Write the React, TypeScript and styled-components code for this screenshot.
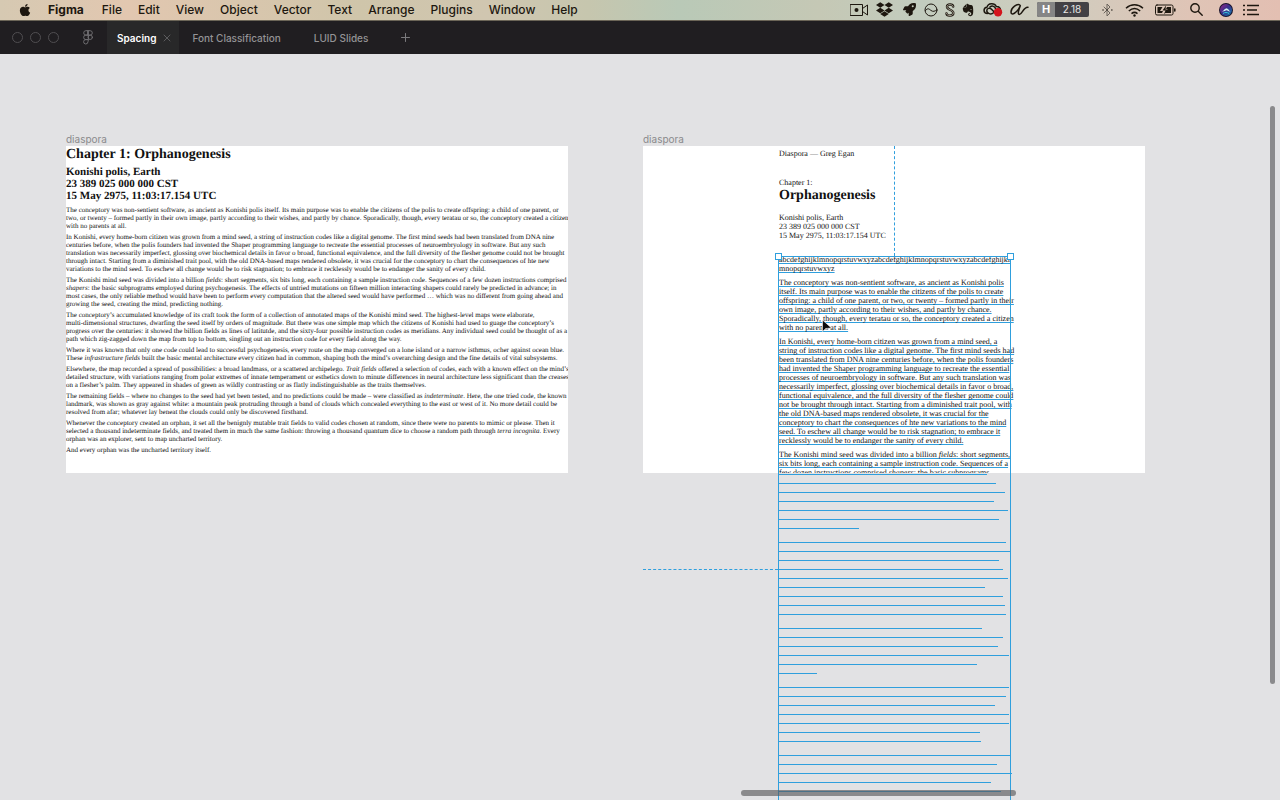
import React from "react";
import styled, { createGlobalStyle } from "styled-components";
import { FaApple, FaDropbox, FaEvernote, FaRocket } from "react-icons/fa";

const BLUE = "#2f9fdd";

const GlobalStyle = createGlobalStyle`
  * { box-sizing: border-box; }
  body { margin: 0; background: #e2e2e4; font-family: Inter, "Liberation Sans", sans-serif; overflow: hidden; }
  h1, h2, p { margin: 0; }
  button { border: 0; padding: 0; background: none; font: inherit; color: inherit; white-space: nowrap; }
`;

const Screen = styled.div`
  display: flex;
  flex-direction: column;
  height: 100vh;
`;

const MenuBar = styled.header`
  display: flex;
  flex: none;
  align-items: center;
  justify-content: space-between;
  height: 21px;
  padding: 0 16px 1px 18px;
  border-bottom: 1px solid #6b6557;
  background: linear-gradient(90deg, #d6c9b2 0%, #e2c7b0 10%, #cfc5aa 28%, #d0c6b0 38%, #c6c6ae 46%, #b9c9b7 53%, #c5c8b5 64%, #c2ccbe 72%, #cfcdbf 82%, #dfc4b6 93%, #e3bfb2 100%);
  color: #1d170f;
`;

const Menus = styled.nav`
  display: flex;
  align-items: center;
  gap: 16px;
  font-size: 12px;
  font-weight: 500;
  line-height: 20px;
`;

const MenuButton = styled.button<{ $bold?: boolean }>`
  display: flex;
  font-weight: ${(p) => (p.$bold ? 700 : 500)};
  margin-right: ${(p) => (p.$bold ? 2 : 0)}px;
`;

const Status = styled.div`
  display: flex;
  align-items: center;
  svg { display: block; }
`;

const StatusItem = styled.button<{ $width: number }>`
  display: flex;
  justify-content: center;
  width: ${(p) => p.$width}px;
`;

const Harvest = styled.button`
  display: flex;
  height: 15px;
  border-radius: 2px;
  overflow: hidden;
  background: #434145;
  color: #e8e6e4;
  font-size: 10px;
  line-height: 15px;
  margin: 0 8px 0 7px;
  b { width: 18px; background: #858585; color: #fff; font-size: 11px; }
  span { width: 34px; }
`;

const TabBar = styled.div`
  display: flex;
  flex: none;
  align-items: center;
  height: 33px;
  background: #201e21;
  color: #949396;
  font-size: 10px;
  font-weight: 500;
`;

const WindowControls = styled.div`
  display: flex;
  gap: 7px;
  margin: 0 24px 0 12px;
`;

const WindowDot = styled.button`
  width: 11px;
  height: 11px;
  border: 1px solid #504e51;
  border-radius: 50%;
`;

const HomeButton = styled.button`
  display: flex;
  margin-right: 14px;
`;

const Tab = styled.div<{ $active?: boolean }>`
  display: flex;
  align-items: center;
  gap: 7px;
  height: 33px;
  padding: ${(p) => (p.$active ? "0 8px 0 10px" : "0 20px 0 13px")};
  background: ${(p) => (p.$active ? "#282829" : "none")};
  color: ${(p) => (p.$active ? "#fff" : "inherit")};
  font-weight: ${(p) => (p.$active ? 600 : 500)};
`;

const Canvas = styled.main`
  position: relative;
  flex: 1;
  overflow: hidden;
  background: #e2e2e4;
`;

const Artboard = styled.section<{ $x: number }>`
  position: absolute;
  left: ${(p) => p.$x}px;
  top: 78px;
  width: 502px;
`;

const ArtboardName = styled.div`
  height: 14px;
  color: #8a8a8c;
  font-size: 10px;
  line-height: 14px;
`;

const Paper = styled.article<{ $indent: number }>`
  height: 327px;
  padding-left: ${(p) => p.$indent}px;
  overflow: hidden;
  background: #fff;
  color: #111;
  font-family: "Liberation Serif", "Times New Roman", serif;
  text-rendering: geometricPrecision;
  white-space: nowrap;
`;

const Title = styled.h1`
  font-size: 14px;
  line-height: 17px;
`;

const Subtitle = styled.h2`
  padding: 3px 0 4px;
  font-size: 11px;
  line-height: 12px;
`;

const Small = styled.p<{ $top: number }>`
  padding-top: ${(p) => p.$top}px;
  font-size: 8px;
  line-height: 9px;
`;

const Paragraph = styled.p<{ $large?: boolean }>`
  margin-bottom: ${(p) => (p.$large ? 5 : 3)}px;
  font-size: ${(p) => (p.$large ? 8 : 7)}px;
  line-height: ${(p) => (p.$large ? 9 : 8)}px;
`;

const Line = styled.span<{ $outlined?: boolean }>`
  display: block;
  text-decoration: ${(p) => (p.$outlined ? `underline 1px ${BLUE}` : "none")};
  text-underline-offset: 1px;
  text-decoration-skip-ink: none;
`;

const Body = styled.div`
  padding-top: 15px;
`;

const Selection = styled.div`
  position: absolute;
  left: 778px;
  top: 202px;
  bottom: -10px;
  width: 233px;
  padding-top: 217px;
  border: 1px solid ${BLUE};
`;

const Handle = styled.i<{ $side: "left" | "right" }>`
  position: absolute;
  top: -4px;
  ${(p) => p.$side}: -4px;
  width: 7px;
  height: 7px;
  border: 1px solid ${BLUE};
  background: #fff;
`;

const OutlineGroup = styled.div`
  margin-bottom: 5px;
`;

const OutlineRow = styled.div`
  height: 9px;
  border-top: 1px solid ${BLUE};
`;

const VerticalGuide = styled.div`
  position: absolute;
  left: 894px;
  top: 92px;
  height: 110px;
  border-left: 1px dashed ${BLUE};
`;

const HorizontalGuide = styled.div`
  position: absolute;
  left: 643px;
  top: 515px;
  width: 135px;
  border-top: 1px dashed ${BLUE};
`;

const Pointer = styled.svg`
  position: absolute;
  left: 821px;
  top: 265px;
`;

const ScrollThumb = styled.div<{ $vertical?: boolean }>`
  position: absolute;
  border-radius: 3px;
  background: rgba(90, 90, 92, 0.65);
  ${(p) =>
    p.$vertical
      ? "right: 5px; top: 52px; width: 5px; height: 578px;"
      : "left: 741px; bottom: 4px; width: 275px; height: 6px;"}
`;

type Text = React.ReactNode[];

const original: Text[] = [
  [
    "The conceptory was non-sentient software, as ancient as Konishi polis itself. Its main purpose was to enable the citizens of the polis to create offspring: a child of one parent, or",
    "two, or twenty – formed partly in their own image, partly according to their wishes, and partly by chance. Sporadically, though, every teratau or so, the conceptory created a citizen",
    "with no parents at all.",
  ],
  [
    "In Konishi, every home-born citizen was grown from a mind seed, a string of instruction codes like a digital genome. The first mind seeds had been translated from DNA nine",
    "centuries before, when the polis founders had invented the Shaper programming language to recreate the essential processes of neuroembryology in software. But any such",
    "translation was necessarily imperfect, glossing over biochemical details in favor o broad, functional equivalence, and the full diversity of the flesher genome could not be brought",
    "through intact. Starting from a diminished trait pool, with the old DNA-based maps rendered obsolete, it was crucial for the conceptory to chart the consequences of hte new",
    "variations to the mind seed. To eschew all change would be to risk stagnation; to embrace it recklessly would be to endanger the sanity of every child.",
  ],
  [
    <>The Konishi mind seed was divided into a billion <em>fields</em>: short segments, six bits long, each containing a sample instruction code. Sequences of a few dozen instructions comprised</>,
    <><em>shapers</em>: the basic subprograms employed during psychogenesis. The effects of untried mutations on fifteen million interacting shapers could rarely be predicted in advance; in</>,
    "most cases, the only reliable method would have been to perform every computation that the altered seed would have performed … which was no different from going ahead and",
    "growing the seed, creating the mind, predicting nothing.",
  ],
  [
    "The conceptory’s accumulated knowledge of its craft took the form of a collection of annotated maps of the Konishi mind seed. The highest-level maps were elaborate,",
    "multi-dimensional structures, dwarfing the seed itself by orders of magnitude. But there was one simple map which the citizens of Konishi had used to guage the conceptory’s",
    "progress over the centuries: it showed the billion fields as lines of latitutde, and the sixty-four possible instruction codes as meridians. Any individual seed could be thought of as a",
    "path which zig-zagged down the map from top to bottom, singling out an instruction code for every field along the way.",
  ],
  [
    "Where it was known that only one code could lead to successful psychogenesis, every route on the map converged on a lone island or a narrow isthmus, ocher against ocean blue.",
    <>These <em>infrastructure fields</em> built the basic mental architecture every citizen had in common, shaping both the mind’s overarching design and the fine details of vital subsystems.</>,
  ],
  [
    <>Elsewhere, the map recorded a spread of possibilities: a broad landmass, or a scattered archipelego. <em>Trait fields</em> offered a selection of codes, each with a known effect on the mind’s</>,
    "detailed structure, with variations ranging from polar extremes of innate temperament or esthetics down to minute differences in neural architecture less significant than the creases",
    "on a flesher’s palm. They appeared in shades of green as wildly contrasting or as flatly indistinguishable as the traits themselves.",
  ],
  [
    <>The remaining fields – where no changes to the seed had yet been tested, and no predictions could be made – were classified as <em>indeterminate</em>. Here, the one tried code, the known</>,
    "landmark, was shown as gray against white: a mountain peak protruding through a band of clouds which concealed everything to the east or west of it. No more detail could be",
    "resolved from afar; whatever lay beneat the clouds could only be discovered firsthand.",
  ],
  [
    "Whenever the conceptory created an orphan, it set all the benignly mutable trait fields to valid codes chosen at random, since there were no parents to mimic or please. Then it",
    <>selected a thousand indeterminate fields, and treated them in much the same fashion: throwing a thousand quantum dice to choose a random path through <em>terra incognita</em>. Every</>,
    "orphan was an explorer, sent to map uncharted territory.",
  ],
  ["And every orphan was the uncharted territory itself."],
];

const narrow: Text[] = [
  ["abcdefghijklmnopqrstuvwxyzabcdefghijklmnopqrstuvwxyzabcdefghijkl", "mnopqrstuvwxyz"],
  [
    "The conceptory was non-sentient software, as ancient as Konishi polis",
    "itself. Its main purpose was to enable the citizens of the polis to create",
    "offspring: a child of one parent, or two, or twenty – formed partly in their",
    "own image, partly according to their wishes, and partly by chance.",
    "Sporadically, though, every teratau or so, the conceptory created a citizen",
    "with no parents at all.",
  ],
  [
    "In Konishi, every home-born citizen was grown from a mind seed, a",
    "string of instruction codes like a digital genome. The first mind seeds had",
    "been translated from DNA nine centuries before, when the polis founders",
    "had invented the Shaper programming language to recreate the essential",
    "processes of neuroembryology in software. But any such translation was",
    "necessarily imperfect, glossing over biochemical details in favor o broad,",
    "functional equivalence, and the full diversity of the flesher genome could",
    "not be brought through intact. Starting from a diminished trait pool, with",
    "the old DNA-based maps rendered obsolete, it was crucial for the",
    "conceptory to chart the consequences of hte new variations to the mind",
    "seed. To eschew all change would be to risk stagnation; to embrace it",
    "recklessly would be to endanger the sanity of every child.",
  ],
  [
    <>The Konishi mind seed was divided into a billion <em>fields</em>: short segments,</>,
    "six bits long, each containing a sample instruction code. Sequences of a",
    <>few dozen instructions comprised <em>shapers</em>: the basic subprograms</>,
  ],
];

const outlines = [
  [208, 217, 226, 215, 229, 220, 80],
  [227, 232, 220, 224, 229, 206, 224, 226, 227],
  [203, 224, 219, 230, 198, 38],
  [230, 227, 216, 230, 230, 201, 202],
  [231, 218, 233, 212, 222],
];

const menus = ["File", "Edit", "View", "Object", "Vector", "Text", "Arrange", "Plugins", "Window", "Help"];

function Paragraphs({ text, outlined }: { text: Text[]; outlined?: boolean }) {
  return (
    <>
      {text.map((lines, i) => (
        <Paragraph key={i} $large={outlined}>
          {lines.map((line, j) => (
            <Line key={j} $outlined={outlined}>{line}</Line>
          ))}
        </Paragraph>
      ))}
    </>
  );
}

const stroke = { fill: "none", stroke: "currentColor", strokeLinecap: "round", strokeLinejoin: "round" } as const;

const CameraIcon = () => (
  <svg width="18" height="12" viewBox="0 0 18 12" {...stroke}>
    <rect x="0.5" y="0.5" width="12" height="11" />
    <path d="M12.5 4.5 17.5 1v10l-5-3.5" />
    <circle cx="6.5" cy="6" r="2" fill="currentColor" stroke="none" />
  </svg>
);
const CircleIcon = () => (
  <svg width="14" height="14" viewBox="0 0 14 14" {...stroke}>
    <circle cx="7" cy="7" r="6" />
    <path d="M1.500 7.500C4 4.500 5 6 7 7.500s4 .8 5.500-.5" />
  </svg>
);
const SIcon = () => (
  <svg width="10" height="14" viewBox="0 0 10 14" {...stroke}>
    <path strokeWidth="2.400" d="M8.200 3.500C7.800.8 2 .8 2 3.800 2 7 8.300 6.500 8.300 10 8.300 13.500 1.700 13.400 1.500 10.500" />
    <path stroke="#d6d0c2" strokeWidth="0.700" d="M8.200 3.500C7.800.8 2 .8 2 3.800 2 7 8.300 6.500 8.300 10 8.300 13.500 1.700 13.400 1.500 10.500" />
  </svg>
);
const CloudIcon = () => (
  <svg width="20" height="15" viewBox="0 0 20 15" {...stroke} strokeWidth="1.500">
    <path d="M4.500 11.500C0 11.500 0 5.500 4 5.200 5 .8 11.500.5 13.300 4.500c3 0 4.200 2 4.200 4" />
    <path d="M10.500 10.800C8 13 3.800 11.500 3.800 8.800s3-3.300 4.700-1.600l2.500 2.500M7 4.800c2.500-1.500 5-.3 5.500 1.700" />
    <circle cx="15" cy="10.200" r="4.200" fill="#d3141c" stroke="none" />
  </svg>
);
const ScriptAIcon = () => (
  <svg width="19" height="13" viewBox="0 0 19 13" {...stroke} strokeWidth="1.500">
    <path d="M9.800 2C7.500.3 1 4.500 1 9c0 4.200 6 1.200 9.300-6.300C8.800 6.500 7.300 11.300 9.300 11.500 12.500 11.500 13 4 18 4.300" />
  </svg>
);
const BluetoothIcon = () => (
  <svg width="11" height="14" viewBox="0 0 11 14" {...stroke} stroke="#6b645c">
    <path d="m2 4 6 6-3 3V1l3 3-6 6" />
    <path strokeWidth="1.600" d="M1 7h.1M9.800 7h.1M5 7h.1" stroke="#3a342e" />
  </svg>
);
const WifiIcon = () => (
  <svg width="19" height="14" viewBox="0 0 19 14" {...stroke} strokeWidth="1.500" strokeLinecap="butt">
    <path d="M1 5.200c5-4.500 12-4.500 17 0M3.800 8c3.500-3 7.900-3 11.400 0M6.500 10.600c1.800-1.500 4.200-1.500 6 0" />
    <circle cx="9.500" cy="12.500" r="1.200" fill="currentColor" stroke="none" />
  </svg>
);
const BatteryIcon = () => (
  <svg width="21" height="12" viewBox="0 0 21 12" {...stroke}>
    <rect x="0.500" y="1" width="17.500" height="10" rx="1.500" />
    <path d="M2.500 3h5L5 7h3l-1 2H2.500zM12 3h4v6H9.500L13 5h-2z" fill="currentColor" stroke="none" />
    <path d="M11 1.500 7.500 6.500h3L9 10.500l4.500-5h-3z" fill="currentColor" stroke="none" />
    <path strokeWidth="1.600" d="M19.800 5v2" />
  </svg>
);
const SearchIcon = () => (
  <svg width="13" height="13" viewBox="0 0 13 13" {...stroke} strokeWidth="1.400">
    <circle cx="5" cy="5" r="4.200" />
    <path d="m8.200 8.200 4 4" />
  </svg>
);
const SiriIcon = () => (
  <svg width="14" height="14" viewBox="0 0 14 14">
    <defs>
      <linearGradient id="siri" x1="0" y1="0" x2="1" y2="1">
        <stop offset="0" stopColor="#9a2a86" />
        <stop offset="0.450" stopColor="#3c2f8c" />
        <stop offset="1" stopColor="#0e7fae" />
      </linearGradient>
    </defs>
    <circle cx="7" cy="7" r="7" fill="#17122c" />
    <circle cx="7" cy="7" r="6" fill="url(#siri)" />
    <path d="M3 8.500c2-.8 2.800-3.300 4.500-3.300s2.300 2.500 4 3.300C9.500 8.800 8.500 7.300 7.500 7.300S5 8.900 3 8.500z" fill="#d9f3f5" />
    <path d="M4 10.500c2-1.500 4-1.500 6 0" fill="none" stroke="#35c4d8" />
  </svg>
);
const ListIcon = () => (
  <svg width="17" height="12" viewBox="0 0 17 12" {...stroke} strokeWidth="1.700" strokeLinecap="butt">
    <path d="M0 1.500h2M0 6h2M0 10.500h2M4 1.500h12M4 6h10M4 10.500h12" />
  </svg>
);
const FigmaIcon = () => (
  <svg width="10" height="15" viewBox="0 0 10 15" {...stroke} stroke="#6f6e71">
    <path d="M5 .7H2.900a2.100 2.100 0 0 0 0 4.400H5zM5 .7h2.100a2.100 2.100 0 0 1 0 4.400H5zM5 5.100H2.900a2.100 2.100 0 0 0 0 4.500H5zM5 9.600H2.900A2.200 2.200 0 1 0 5 12z" />
    <circle cx="7.200" cy="7.300" r="2.200" />
  </svg>
);

export default function App() {
  return (
    <Screen>
      <GlobalStyle />
      <MenuBar>
        <Menus>
          <MenuButton aria-label="Apple"><FaApple size={14} /></MenuButton>
          <MenuButton $bold>Figma</MenuButton>
          {menus.map((m) => <MenuButton key={m}>{m}</MenuButton>)}
        </Menus>
        <Status>
          <StatusItem $width={24} aria-label="Camera"><CameraIcon /></StatusItem>
          <StatusItem $width={27} aria-label="Dropbox"><FaDropbox size={17} /></StatusItem>
          <StatusItem $width={22} aria-label="Rocket"><FaRocket size={13} /></StatusItem>
          <StatusItem $width={21} aria-label="Status"><CircleIcon /></StatusItem>
          <StatusItem $width={18} aria-label="Sync"><SIcon /></StatusItem>
          <StatusItem $width={18} aria-label="Evernote"><FaEvernote size={14} /></StatusItem>
          <StatusItem $width={32} aria-label="Creative Cloud"><CloudIcon /></StatusItem>
          <StatusItem $width={21} aria-label="Script"><ScriptAIcon /></StatusItem>
          <Harvest><b>H</b><span>2.18</span></Harvest>
          <StatusItem $width={21} aria-label="Bluetooth"><BluetoothIcon /></StatusItem>
          <StatusItem $width={32} aria-label="Wi-Fi"><WifiIcon /></StatusItem>
          <StatusItem $width={30} aria-label="Battery"><BatteryIcon /></StatusItem>
          <StatusItem $width={32} aria-label="Search"><SearchIcon /></StatusItem>
          <StatusItem $width={27} aria-label="Siri"><SiriIcon /></StatusItem>
          <StatusItem $width={25} aria-label="Notifications"><ListIcon /></StatusItem>
        </Status>
      </MenuBar>
      <TabBar>
        <WindowControls>
          <WindowDot aria-label="Close" />
          <WindowDot aria-label="Minimize" />
          <WindowDot aria-label="Zoom" />
        </WindowControls>
        <HomeButton aria-label="Home"><FigmaIcon /></HomeButton>
        <Tab $active>
          <button>Spacing</button>
          <button aria-label="Close tab">
            <svg width="8" height="8" viewBox="0 0 8 8" {...stroke} stroke="#5c5c5e"><path d="m1 1 6 6M7 1 1 7" /></svg>
          </button>
        </Tab>
        <Tab><button>Font Classification</button></Tab>
        <Tab><button>LUID Slides</button></Tab>
        <Tab>
          <button aria-label="New tab">
            <svg width="9" height="9" viewBox="0 0 9 9" {...stroke} stroke="#7b7a7d"><path d="M4.500.5v8M.5 4.500h8" /></svg>
          </button>
        </Tab>
      </TabBar>
      <Canvas>
        <Artboard $x={66}>
          <ArtboardName>diaspora</ArtboardName>
          <Paper $indent={0}>
            <Title>Chapter 1: Orphanogenesis</Title>
            <Subtitle>Konishi polis, Earth<br />23 389 025 000 000 CST<br />15 May 2975, 11:03:17.154 UTC</Subtitle>
            <Paragraphs text={original} />
          </Paper>
        </Artboard>
        <Artboard $x={643}>
          <ArtboardName>diaspora</ArtboardName>
          <Paper $indent={136}>
            <Small $top={3}>Diaspora — Greg Egan</Small>
            <Small $top={20}>Chapter 1:</Small>
            <Title>Orphanogenesis</Title>
            <Small $top={9}>Konishi polis, Earth<br />23 389 025 000 000 CST<br />15 May 2975, 11:03:17.154 UTC</Small>
            <Body><Paragraphs text={narrow} outlined /></Body>
          </Paper>
        </Artboard>
        <VerticalGuide />
        <HorizontalGuide />
        <Selection>
          {outlines.map((group, i) => (
            <OutlineGroup key={i}>
              {group.map((width, j) => <OutlineRow key={j} style={{ width }} />)}
            </OutlineGroup>
          ))}
          <Handle $side="left" />
          <Handle $side="right" />
        </Selection>
        <Pointer width="12" height="15" viewBox="0 0 12 15">
          <path d="M1.500 1v11.500l3.300-3 5.700-.5z" fill="#0b0b0b" stroke="#fff" strokeWidth="0.600" />
        </Pointer>
        <ScrollThumb $vertical />
        <ScrollThumb />
      </Canvas>
    </Screen>
  );
}
